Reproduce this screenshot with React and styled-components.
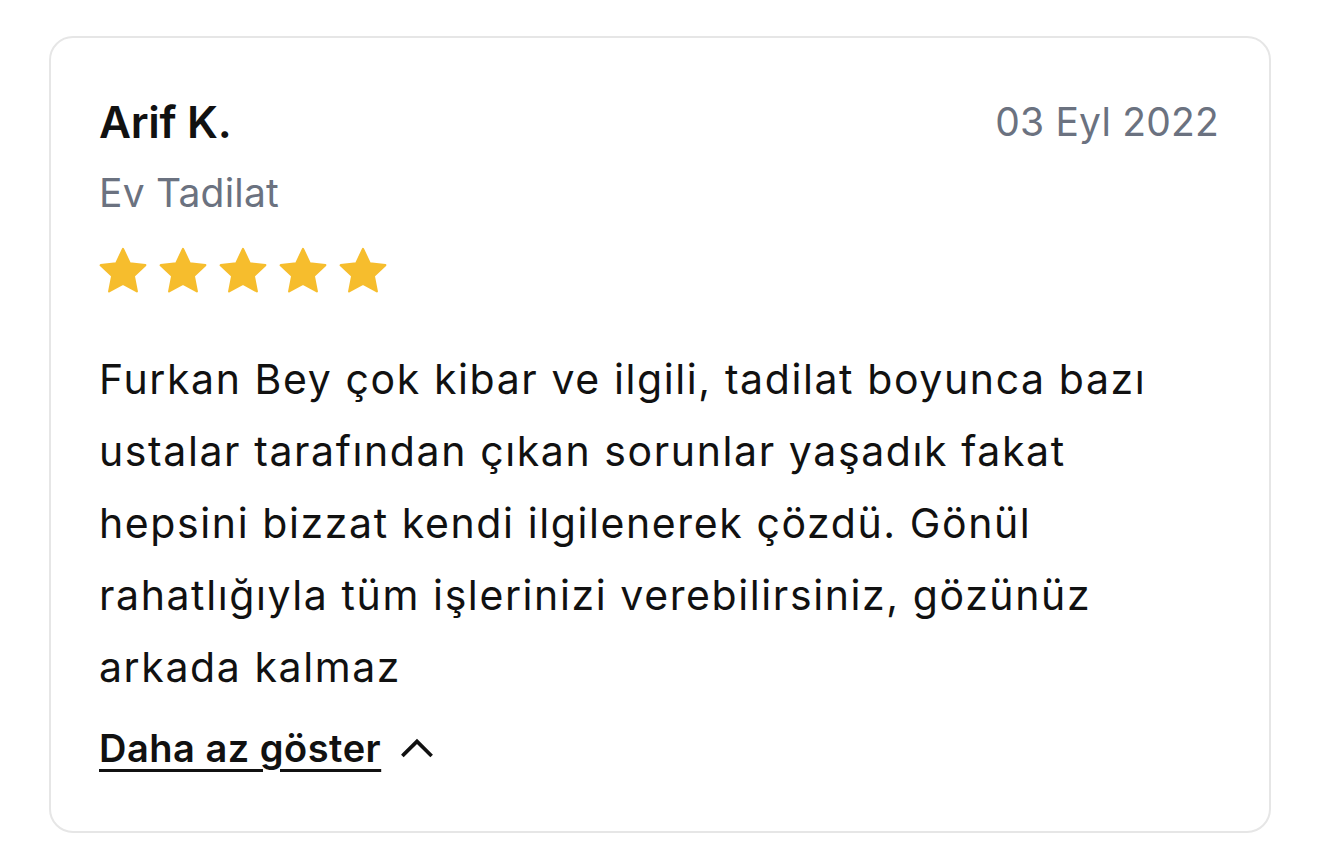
import React from 'react';
import styled, { createGlobalStyle } from 'styled-components';

const GlobalStyle = createGlobalStyle`
  body {
    margin: 0;
    background: #fff;
    font-family: 'Inter', 'Noto Sans', sans-serif;
    color: #111;
  }
`;

const Card = styled.div`
  box-sizing: border-box;
  width: 1222px;
  margin: 36px 0 0 49px;
  border: 2px solid #e6e6e6;
  border-radius: 24px;
  padding: 52px 50px 60px 48px;
`;

const Header = styled.div`
  display: flex;
  justify-content: space-between;
  align-items: flex-start;
`;

const Name = styled.h3`
  margin: 0;
  font-size: 44px;
  line-height: 64px;
  font-weight: 600;
  letter-spacing: -0.3px;
`;

const DateText = styled.span`
  font-size: 39px;
  line-height: 64px;
  color: #6b7280;
  letter-spacing: 0.2px;
`;

const Category = styled.div`
  font-size: 39px;
  line-height: 52px;
  color: #6b7280;
  margin-top: 13px;
  letter-spacing: 0.2px;
`;

const Stars = styled.div`
  display: flex;
  gap: 8px;
  margin: 26px 0 0 -2px;
`;

const Body = styled.p`
  margin: 46px 0 0;
  font-size: 41px;
  line-height: 72px;
  letter-spacing: 1.6px;
  max-width: 1110px;
`;

const Toggle = styled.button`
  display: flex;
  align-items: center;
  gap: 16px;
  margin-top: 22px;
  padding: 0;
  border: none;
  background: none;
  font-family: inherit;
  font-size: 38px;
  font-weight: 600;
  letter-spacing: 0.5px;
  color: #111;
  cursor: pointer;
`;

const ToggleLabel = styled.span`
  text-decoration: underline;
  text-underline-offset: 7px;
  text-decoration-thickness: 3px;
`;

const Star = () => (
  <svg width="52" height="52" viewBox="0 0 24 24">
    <path
      d="M12 1.8l3.1 6.6 7.2.9-5.3 5 1.4 7.1L12 17.9l-6.4 3.5 1.4-7.1-5.3-5 7.2-.9z"
      fill="#f6bd2d"
      stroke="#f6bd2d"
      strokeWidth="1"
      strokeLinejoin="round"
    />
  </svg>
);

const ChevronUp = () => (
  <svg width="40" height="40" viewBox="0 0 24 24" fill="none">
    <path d="M4 16l8-8 8 8" stroke="#111" strokeWidth="2.2" strokeLinecap="square" />
  </svg>
);

export default function App() {
  return (
    <>
      <GlobalStyle />
      <Card>
        <Header>
          <div>
            <Name>Arif K.</Name>
            <Category>Ev Tadilat</Category>
          </div>
          <DateText>03 Eyl 2022</DateText>
        </Header>
        <Stars>
          {[0, 1, 2, 3, 4].map((i) => (
            <Star key={i} />
          ))}
        </Stars>
        <Body>
          Furkan Bey çok kibar ve ilgili, tadilat boyunca bazı ustalar tarafından çıkan sorunlar
          yaşadık fakat hepsini bizzat kendi ilgilenerek çözdü. Gönül rahatlığıyla tüm işlerinizi
          verebilirsiniz, gözünüz arkada kalmaz
        </Body>
        <Toggle>
          <ToggleLabel>Daha az göster</ToggleLabel>
          <ChevronUp />
        </Toggle>
      </Card>
    </>
  );
}
